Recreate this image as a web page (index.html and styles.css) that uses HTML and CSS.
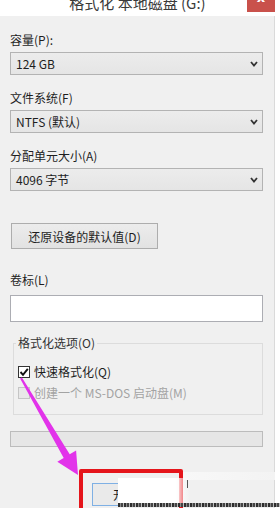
FILE: index.html
```html
<!DOCTYPE html>
<html lang="zh-CN">
<head>
<meta charset="utf-8">
<title>格式化 本地磁盘 (G:)</title>
<link rel="stylesheet" href="styles.css">
</head>
<body>
<div class="window">
  <div class="titlebar">
    <div class="title"><span class="title-text">格式化 本地磁盘 (G:)</span></div>
    <div class="close"><span class="close-x">x</span></div>
  </div>
  <div class="main">
    <div class="dialog">
      <div class="field">
        <div class="label">容量(P):</div>
        <div class="select"><span>124 GB</span><svg class="chev" width="8" height="6" viewBox="0 0 8 6"><polyline points="1,1 4,4.5 7,1" fill="none" stroke="#333" stroke-width="1.8"/></svg></div>
      </div>
      <div class="field">
        <div class="label">文件系统(F)</div>
        <div class="select"><span>NTFS (默认)</span><svg class="chev" width="8" height="6" viewBox="0 0 8 6"><polyline points="1,1 4,4.5 7,1" fill="none" stroke="#333" stroke-width="1.8"/></svg></div>
      </div>
      <div class="field">
        <div class="label">分配单元大小(A)</div>
        <div class="select"><span>4096 字节</span><svg class="chev" width="8" height="6" viewBox="0 0 8 6"><polyline points="1,1 4,4.5 7,1" fill="none" stroke="#333" stroke-width="1.8"/></svg></div>
      </div>
      <div class="btn restore">还原设备的默认值(D)</div>
      <div class="label vol">卷标(L)</div>
      <div class="input"></div>
      <div class="group">
        <div class="legend">格式化选项(O)</div>
        <div class="check-row first">
          <span class="cb checked"><svg width="10" height="10" viewBox="0 0 10 10"><path d="M1.5 5 L4 7.8 L8.8 1.8" fill="none" stroke="#111" stroke-width="1.9"/></svg></span>
          <span>快速格式化(Q)</span>
        </div>
        <div class="check-row disabled">
          <span class="cb"></span>
          <span>创建一个 MS-DOS 启动盘(M)</span>
        </div>
      </div>
      <div class="progress"></div>
      <div class="actions">
        <div class="btn start">开始(S)</div>
      </div>
    </div>
    <div class="side"></div>
  </div>

  <div class="blotch"></div>
  <div class="redbox"></div>
  <div class="blotch2"></div>
  <div class="tick"></div>
  <div class="dots"></div>
  <svg class="arrow" width="280" height="508" viewBox="0 0 280 508">
    <polygon points="21.9,377.5 69.7,454.3 76.1,450.4 78,475 57.3,461.8 63.7,457.9 20.1,378.5" fill="#e233ea"/>
  </svg>
</div>
</body>
</html>
```
FILE: styles.css
```css
* { box-sizing: border-box; }
html, body { margin: 0; padding: 0; }
body {
  width: 280px;
  height: 508px;
  overflow: hidden;
  font-family: "Noto Sans CJK SC", "Noto Sans", sans-serif;
  font-size: 12px;
  color: #1e1e1e;
  background: #fff;
}
.window {
  position: relative;
  width: 280px;
  height: 508px;
  overflow: hidden;
  background: #fff;
  display: flex;
  flex-direction: column;
}
.titlebar {
  height: 16px;
  flex: 0 0 16px;
  display: flex;
  background: #fff;
}
.title {
  flex: 1;
  padding-left: 28px;
  text-align: center;
  overflow: hidden;
}
.title-text {
  display: block;
  margin-top: -5px;
  font-size: 15px;
  line-height: 16px;
  color: #3a3a3a;
  white-space: nowrap;
}
.close {
  width: 28px;
  height: 12px;
  margin-right: 5px;
  background: #c9514b;
  color: #fff;
  text-align: center;
  overflow: hidden;
}
.close-x {
  display: block;
  margin-top: -8px;
  font-family: "DejaVu Sans", sans-serif;
  font-size: 13px;
  line-height: 12px;
  font-weight: bold;
}
.main {
  flex: 1;
  display: flex;
}
.dialog {
  width: 275px;
  flex: 0 0 275px;
  background: #f0f0f0;
  border-right: 1px solid #dadada;
  padding: 16px 11px 0 10px;
}
.side { flex: 1; background: #fff; }
.field + .field { margin-top: 15px; }
.label {
  height: 16px;
  line-height: 16px;
  white-space: nowrap;
}
.select {
  margin-top: 4px;
  height: 23px;
  border: 1px solid #b3b3b3;
  background: linear-gradient(#ececec, #e5e5e5);
  display: flex;
  align-items: center;
  justify-content: space-between;
  padding: 0 4px 0 5px;
  line-height: 16px;
}
.chev { display: block; }
.btn {
  border: 1px solid #adadad;
  background: linear-gradient(#ececec, #e2e2e2);
  display: flex;
  align-items: center;
  justify-content: center;
  white-space: nowrap;
}
.restore {
  margin-top: 32px;
  margin-left: 1px;
  width: 147px;
  height: 26px;
}
.vol { margin-top: 23px; }
.input {
  margin-top: 7px;
  height: 27px;
  border: 1px solid #acadb3;
  background: #fff;
}
.group {
  margin-top: 21px;
  margin-left: 3px;
  border: 1px solid #dcdcdc;
  padding: 0 4px 13px;
}
.legend {
  margin-top: -9px;
  margin-left: -2px;
  width: fit-content;
  padding: 0 2px;
  background: #f0f0f0;
  height: 16px;
  line-height: 16px;
  color: #333;
}
.check-row {
  display: flex;
  align-items: center;
  gap: 4px;
  height: 16px;
  line-height: 16px;
  white-space: nowrap;
}
.check-row.first { margin-top: 13px; }
.check-row.disabled { margin-top: 5px; color: #a3a3a3; }
.cb {
  width: 12px;
  height: 12px;
  border: 1px solid #333;
  background: #fff;
  display: flex;
  align-items: center;
  justify-content: center;
}
.check-row.disabled .cb {
  border-color: #c5c5c5;
  background: #e8e8e8;
}
.progress {
  margin-top: 16px;
  height: 16px;
  border: 1px solid #bcbcbc;
  background: #e6e6e6;
}
.actions {
  margin-top: 36px;
  display: flex;
}
.start {
  margin-left: 82px;
  width: 75px;
  height: 23px;
  border-color: #7fb0e4;
  background: #eaeaea;
  justify-content: flex-start;
  padding-left: 20px;
}
.redbox {
  position: absolute;
  left: 79px;
  top: 469px;
  width: 104px;
  height: 50px;
  border: 4px solid #e5151b;
  border-radius: 2px;
}
.blotch {
  position: absolute;
  left: 183px;
  top: 472px;
  width: 92px;
  height: 8px;
  background: linear-gradient(90deg, #f8f8f8, #f3f3f3);
}
.blotch2 {
  position: absolute;
  left: 118px;
  top: 478px;
  width: 72px;
  height: 26px;
  background: linear-gradient(90deg, #fff 80%, rgba(255,255,255,0));
}
.tick {
  position: absolute;
  left: 187px;
  top: 480px;
  width: 1px;
  height: 8px;
  background: #555;
}
.dots {
  position: absolute;
  left: 118px;
  top: 503px;
  width: 162px;
  height: 4px;
  background: repeating-linear-gradient(90deg, #2e2e2e 0 2px, #8a8a8a 2px 3px, #444 3px 5px, #bbb 5px 6px);
}
.arrow {
  position: absolute;
  left: 0;
  top: 0;
  pointer-events: none;
}
```
